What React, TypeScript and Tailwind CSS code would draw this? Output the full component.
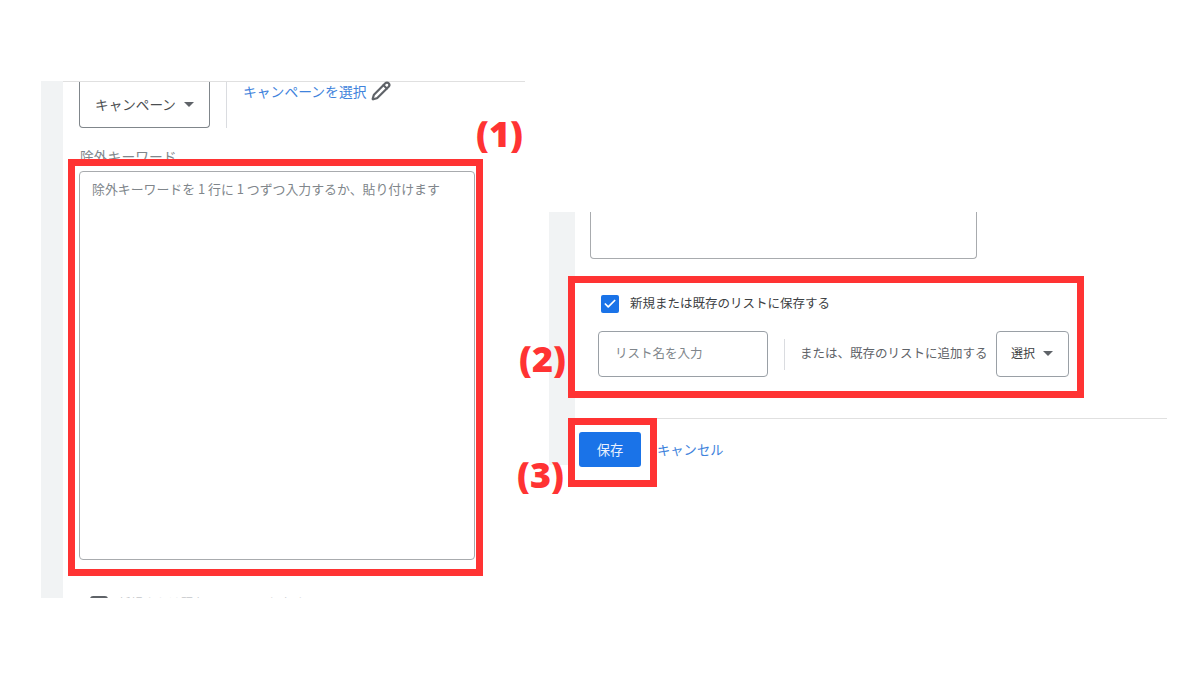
import React from 'react';
import { Check, Pencil } from 'lucide-react';

const jp = { fontFamily: '"Noto Sans CJK JP", "Noto Sans", sans-serif' };

const Caret = () => <span className="ml-[8px] inline-block border-x-[5px] border-t-[5px] border-x-transparent border-t-[#5f6368]" />;

const Callout = ({ text, className }: { text: string; className: string }) => (
  <span className={`absolute text-[#ff3333] text-[36px] leading-[40px] font-extrabold font-['Open_Sans'] ${className}`}>{text}</span>
);

export default function App() {
  return (
    <div className="relative flex items-start w-[1200px] h-[679px] bg-white overflow-hidden" style={jp}>
      {/* left fragment */}
      <div className="flex ml-[41px] mt-[81px] w-[484px] h-[517px] overflow-hidden shrink-0">
        <div className="w-[22px] bg-[#f1f3f4] shrink-0" />
        <div className="flex-1 border-t border-[#e0e0e0]">
          <div className="flex h-[46px] pl-[16px]">
            <div className="flex items-center justify-center w-[131px] border border-t-0 border-[#80868b] rounded-b-[4px] text-[13.6px] text-[#4a4d50]">
              キャンペーン
              <Caret />
            </div>
            <div className="w-px bg-[#dadce0] ml-[16px]" />
            <div className="flex items-start ml-[16px] mt-[-1px]">
              <span className="text-[13.8px] leading-[20px] text-[#3f83dc]">キャンペーンを選択</span>
              <Pencil size={20} strokeWidth={2.6} className="ml-[5px] text-[#5f6368]" />
            </div>
          </div>
          <div className="ml-[17px] mt-[18px] text-[13.8px] leading-[20px] text-[#80868b]">除外キーワード</div>
          <div className="relative ml-[5px] mt-[-7px] w-[415px] h-[417px] border-[7px] border-[#ff3333] pl-[4px] pr-[1px] pt-[5px] pb-[9px]">
            <div className="h-full border border-[#a8abae] rounded-[4px] px-[12px] py-[7px] text-[12.9px] leading-[20px] text-[#80868b] bg-white">
              除外キーワードを 1 行に 1 つずつ入力するか、貼り付けます
            </div>
          </div>
          <div className="flex items-start ml-[27px] mt-[20px]">
            <div className="w-[18px] h-[18px] border-2 border-[#5f6368] rounded-[3px] shrink-0" />
            <span className="ml-[10px] -mt-[2px] text-[12.5px] leading-[18px] text-[#c4c7ca]">新規または既存のリストに保存する</span>
          </div>
        </div>
      </div>

      {/* right fragment */}
      <div className="flex flex-col ml-[24px] mt-[212px] w-[618px] shrink-0">
        <div className="flex">
          <div className="w-[26px] bg-[#f1f3f4] shrink-0" />
          <div className="flex-1 h-[206px]">
            <div className="ml-[15px] w-[387px] h-[47px] border border-t-0 border-[#a8abae] rounded-b-[4px]" />
            <div className="relative -ml-[7px] mt-[17px] w-[516px] h-[122px] border-[7px] border-[#ff3333] bg-white">
              <div className="flex items-center ml-[26px] mt-[12px] h-[18px]">
                <span className="flex items-center justify-center w-[18px] h-[18px] bg-[#1a73e8] rounded-[2px]">
                  <Check size={14} strokeWidth={3} className="text-white" />
                </span>
                <span className="ml-[11px] -mt-[2px] text-[12.5px] text-[#3c4043]">新規または既存のリストに保存する</span>
              </div>
              <div className="flex items-center ml-[23px] mt-[18px]">
                <div className="flex items-center w-[170px] h-[46px] border border-[#9aa0a6] rounded-[4px] pl-[16px] pb-[2px] text-[12.5px] text-[#80868b]">リスト名を入力</div>
                <div className="w-px h-[31px] bg-[#dadce0] ml-[16px]" />
                <span className="ml-[15px] pb-[2px] text-[12.5px] text-[#5f6368]">または、既存のリストに追加する</span>
                <div className="flex items-center justify-center w-[73px] h-[46px] ml-[8px] pb-[2px] border border-[#9aa0a6] rounded-[4px] text-[12px] text-[#3c4043]">
                  選択
                  <Caret />
                </div>
              </div>
            </div>
          </div>
        </div>
        <div className="flex h-px">
          <div className="w-[26px] bg-[#f1f3f4] shrink-0" />
          <div className="flex-1 bg-[#e0e0e0]" />
        </div>
        <div className="relative flex items-start -mt-px">
          <div className="w-[19px] h-[47px] bg-[#f1f3f4] shrink-0" />
          <div className="w-[89px] h-[69px] border-[7px] border-[#ff3333] bg-white pl-[4px] pt-[7px]">
            <div className="flex items-center justify-center w-[62px] h-[35px] bg-[#1a73e8] rounded-[3px] text-[13.3px] text-[#e8f0fe]">保存</div>
          </div>
          <span className="mt-[22px] text-[13.3px] leading-[20px] text-[#3f83dc]">キャンセル</span>
        </div>
      </div>

      <Callout text="(1)" className="left-[476px] top-[114px]" />
      <Callout text="(2)" className="left-[519px] top-[339px]" />
      <Callout text="(3)" className="left-[517px] top-[455px]" />
    </div>
  );
}
